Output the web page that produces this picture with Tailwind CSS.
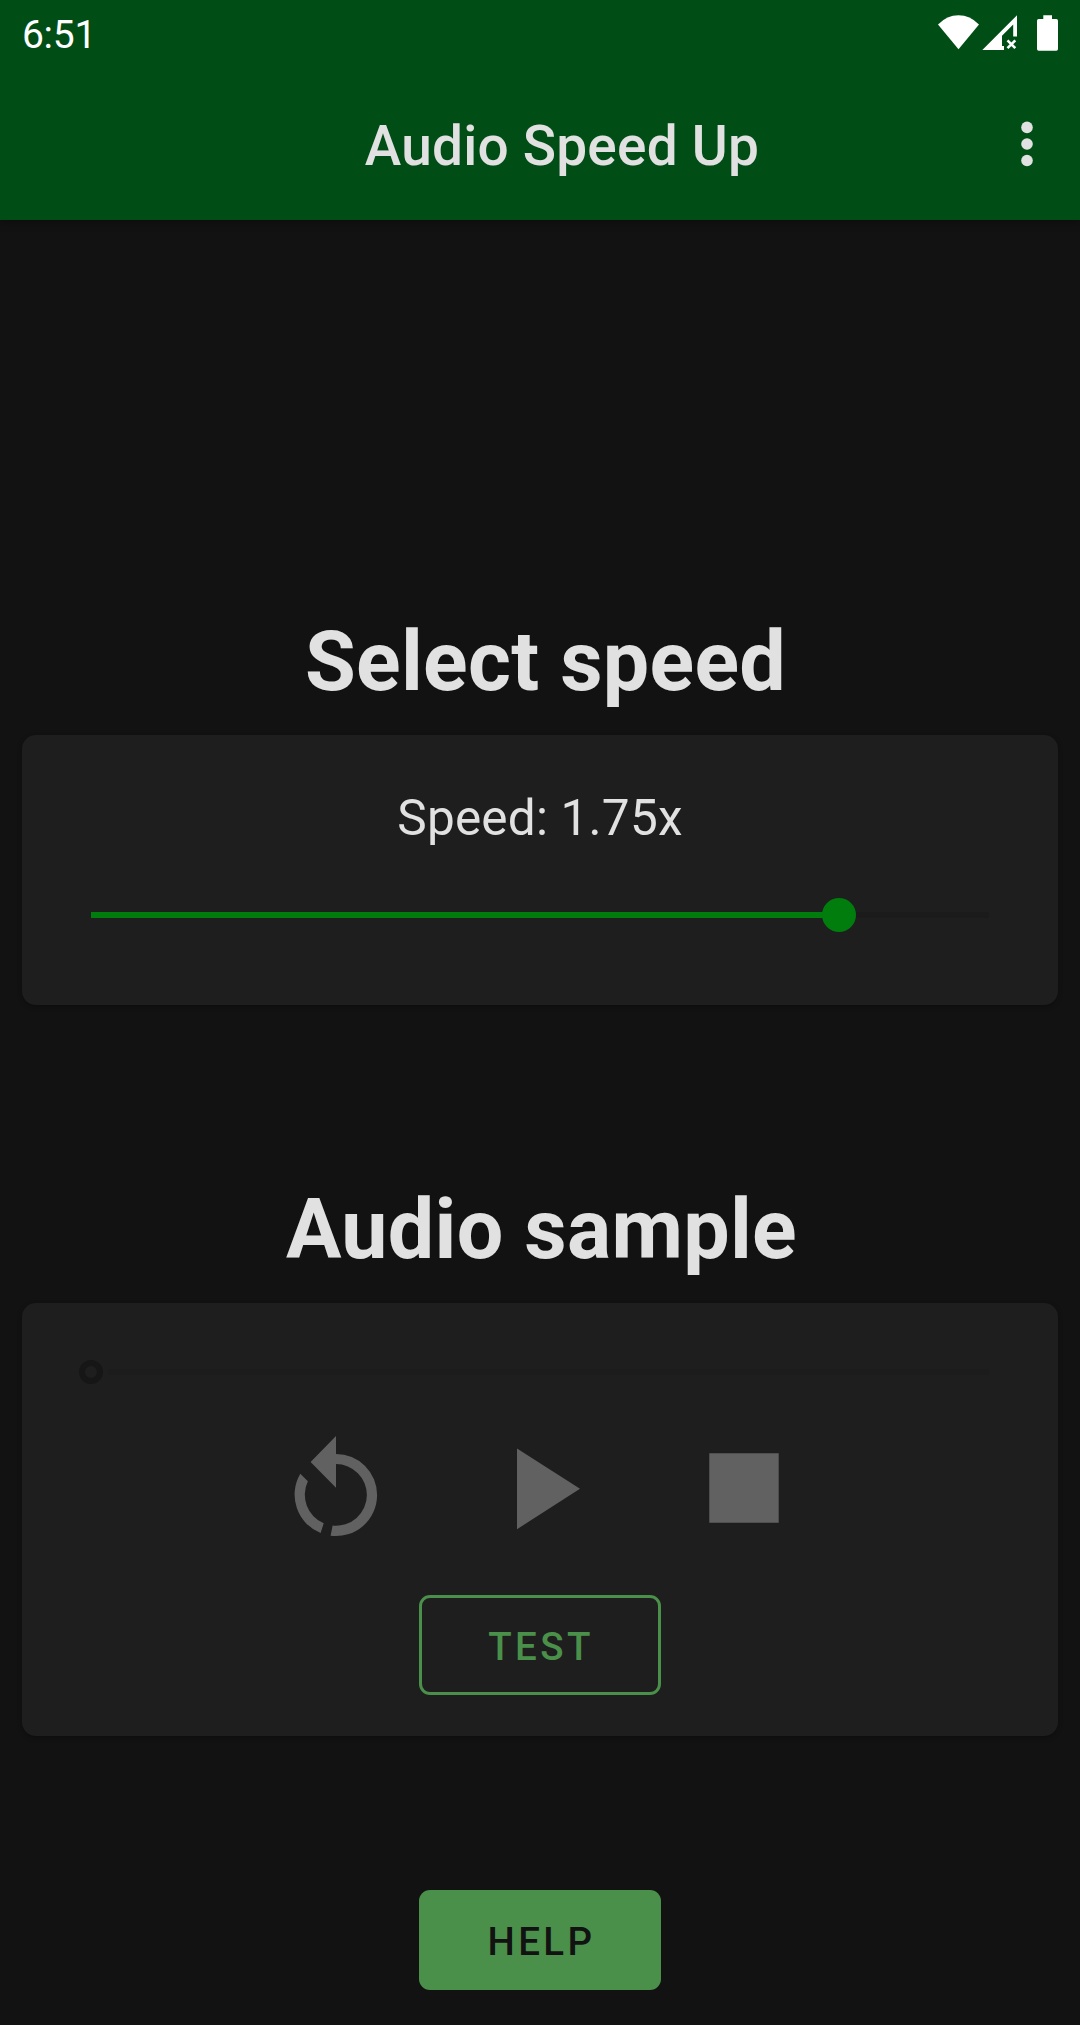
<!DOCTYPE html>
<html lang="en">
<head>
<meta charset="utf-8">
<title>Audio Speed Up</title>
<script src="https://cdn.jsdelivr.net/npm/@tailwindcss/browser@4"></script>
</head>
<body class="bg-[#121212] font-[Roboto,sans-serif] text-[#e1e1e1]">
<div class="flex h-[2025px] w-[1080px] flex-col overflow-hidden">
  <header class="h-[220px] shrink-0 bg-[#004e16] shadow-[0_3px_8px_rgba(0,0,0,0.3)]">
    <div class="flex h-[66px] justify-between pl-[22px] text-white">
      <span class="pt-[11px] text-[39px] leading-[48px] tracking-[-0.3px]">6:51</span>
      <svg class="h-[66px] w-[150px]" viewBox="930 0 150 66" fill="currentColor">
        <path d="M938 24.5Q947 15.3 958.5 15.3T979 24.5L958.5 49.3Z"/>
        <path fill-rule="evenodd" d="M982.3 50L1017 15.3V36.6H1013.2V24.5L1002 35.8V46H1004V50Z"/>
        <path d="M1007.5 40.3L1015.3 48.2M1015.3 40.3L1007.5 48.2" fill="none" stroke="currentColor" stroke-width="2.6"/>
        <path d="M1043.3 15.3H1052V19H1056.3Q1058 19 1058 20.7V49Q1058 50.7 1056.3 50.7H1038.7Q1037 50.7 1037 49V20.7Q1037 19 1038.7 19H1043.3Z"/>
      </svg>
    </div>
    <div class="flex h-[154px] items-start justify-end">
      <h1 class="mr-[258px] pt-[48px] text-[55px] leading-[64px] font-medium tracking-[0.2px] whitespace-nowrap">Audio Speed Up</h1>
      <svg class="mt-[50px] mr-[43px] h-[56px] w-[20px]" viewBox="0 0 20 56" fill="currentColor">
        <circle cx="10" cy="11.4" r="5.8"/><circle cx="10" cy="28" r="5.8"/><circle cx="10" cy="44.5" r="5.8"/>
      </svg>
    </div>
  </header>

  <main class="flex flex-col items-center px-[22px]">
    <h2 class="mt-[394px] h-[121px] pl-[11px] text-[82.5px] leading-[96px] font-bold tracking-[0.3px]">Select speed</h2>
    <section class="h-[270px] w-full rounded-[14px] bg-[#1e1e1e] px-[69px] shadow-[0_2px_5px_rgba(0,0,0,0.25)]">
      <p class="pt-[54px] text-center text-[49.5px] leading-[58px] tracking-[0.2px]">Speed: 1.75x</p>
      <div class="mt-[51px] flex h-[34px] items-center">
        <div class="h-[6px] w-[732px] bg-[#007d0c]"></div>
        <div class="-ml-[1px] size-[34px] rounded-full bg-[#007d0c]"></div>
        <div class="h-[6px] flex-1 bg-[#1b1b1b]"></div>
      </div>
    </section>

    <h2 class="mt-[177px] h-[121px] pl-[3px] text-[82.5px] leading-[96px] font-bold tracking-[0.3px]">Audio sample</h2>
    <section class="flex h-[433px] w-full flex-col items-center rounded-[14px] bg-[#1e1e1e] shadow-[0_2px_5px_rgba(0,0,0,0.25)]">
      <div class="mt-[57px] flex h-[24px] w-full items-center pr-[69px] pl-[57px]">
        <div class="size-[24px] rounded-full border-[6px] border-[#161616]"></div>
        <div class="ml-[5px] h-[6px] flex-1 bg-[#1c1c1c]"></div>
      </div>
      <div class="mt-[46px] flex w-full items-center pl-[252px] text-[#616161]">
        <svg class="h-[120px] w-[124px]" viewBox="274 1430 124 120" fill="currentColor">
          <path d="M336 1436V1453.9A41.1 41.1 0 0 1 377.1 1495A41.1 41.1 0 0 1 330.6 1535.7L332.6 1525.6A30.9 30.9 0 0 0 366.9 1495A30.9 30.9 0 0 0 336 1464.1V1487.7L310.6 1462Z"/>
          <path d="M300.3 1473.8A41.2 41.2 0 0 0 320.6 1533L323.7 1523.3A31 31 0 0 1 307.9 1481.3Z"/>
        </svg>
        <svg class="ml-[80px] h-[120px] w-[124px]" viewBox="478 1430 124 120" fill="currentColor"><path d="M517 1448.5V1529.2L580 1488.8Z"/></svg>
        <svg class="ml-[80px] h-[120px] w-[124px]" viewBox="682 1430 124 120" fill="currentColor"><path d="M709.3 1453.2H778.7V1522.7H709.3Z"/></svg>
      </div>
      <button class="mt-[45px] h-[100px] w-[242px] rounded-[11px] border-[3px] border-[#4a904a] pt-[3px] pl-[2px] text-[38.5px] font-medium tracking-[3.44px] text-[#4a904a]">TEST</button>
    </section>
    <button class="mt-[154px] h-[100px] w-[242px] rounded-[11px] bg-[#4a904a] pt-[3px] pl-[3px] text-[38.5px] font-medium tracking-[3.44px] text-[#121212]">HELP</button>
  </main>
</div>
</body>
</html>
